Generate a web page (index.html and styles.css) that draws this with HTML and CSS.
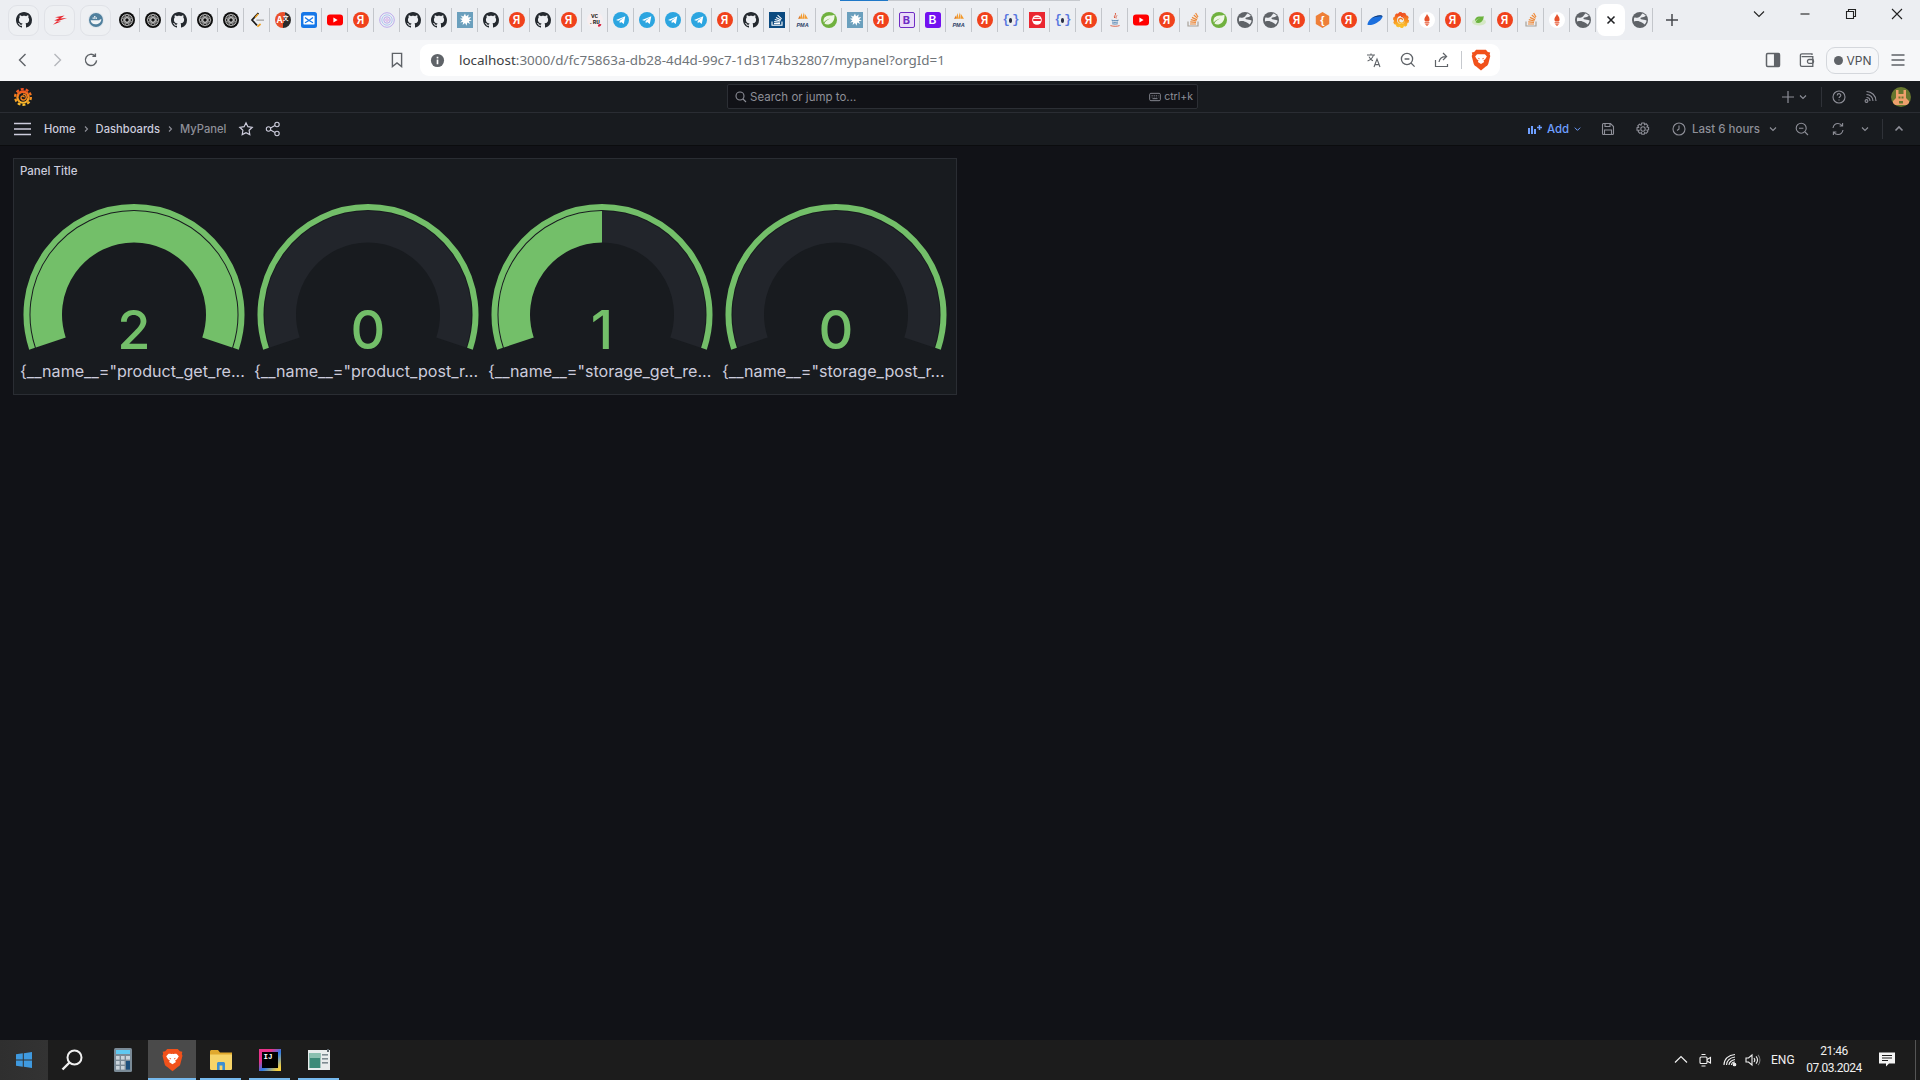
FILE: index.html
```html
<!DOCTYPE html>
<html lang="en">
<head>
<meta charset="utf-8">
<title>MyPanel - Dashboards - Grafana</title>
<link rel="stylesheet" href="styles.css">
</head>
<body>
<svg class="sprite" aria-hidden="true">
  <defs>
    <linearGradient id="gfg" x1="0" y1="1" x2="0" y2="0"><stop offset="0" stop-color="#fbc02d"/><stop offset=".55" stop-color="#f6851f"/><stop offset="1" stop-color="#ef4f22"/></linearGradient>
  </defs>
  <symbol id="gh" viewBox="0 0 16 16"><path fill="#24292f" d="M8 0C3.58 0 0 3.58 0 8c0 3.54 2.29 6.53 5.47 7.59.4.07.55-.17.55-.38 0-.19-.01-.82-.01-1.49-2.01.37-2.53-.49-2.69-.94-.09-.23-.48-.94-.82-1.13-.28-.15-.68-.52-.01-.53.63-.01 1.08.58 1.23.82.72 1.21 1.87.87 2.33.66.07-.52.28-.87.51-1.07-1.78-.2-3.64-.89-3.64-3.95 0-.87.31-1.59.82-2.15-.08-.2-.36-1.02.08-2.12 0 0 .67-.21 2.2.82.64-.18 1.32-.27 2-.27.68 0 1.36.09 2 .27 1.53-1.04 2.2-.82 2.2-.82.44 1.1.16 1.92.08 2.12.51.56.82 1.27.82 2.15 0 3.07-1.87 3.75-3.65 3.95.29.25.54.73.54 1.48 0 1.07-.01 1.93-.01 2.2 0 .21.15.46.55.38A8.013 8.013 0 0016 8c0-4.42-3.58-8-8-8z"/></symbol>
  <symbol id="z" viewBox="0 0 16 16"><path fill="#e8222a" d="M3 5.2 12.6 3.6 8.200 6.600 15 6 4.600 9.400 9 9.600 1 12.800 5.600 8.800 2.200 8.600 7.600 6Z"/></symbol>
  <symbol id="dock" viewBox="0 0 16 16"><circle cx="8" cy="8" r="8" fill="#dfe6ec"/><circle cx="8" cy="8" r="7" fill="#4f7f9d"/><path fill="#f1f4f6" d="M2.600 8.200h8.600c.6-.6 1-.9 2.200-.9-.2 3-2.800 5-6 5-2.600 0-4.400-1.600-4.800-4.100Z"/><path fill="#fff" d="M4.600 5.600h1.200v1.200H4.600zm1.600 0h1.200v1.200H6.200zm1.600 0H9v1.200H7.800zM6.200 4h1.200v1.200H6.200z"/></symbol>
  <symbol id="ai" viewBox="0 0 16 16"><circle cx="8" cy="8" r="8" fill="#0d0d0d"/><g fill="none" stroke="#e6e6e6" stroke-width=".55"><circle cx="8" cy="8" r="5.800"/><circle cx="8" cy="8" r="2"/><ellipse cx="8" cy="8" rx="2.400" ry="5.600"/><ellipse cx="8" cy="8" rx="5.600" ry="2.400"/><ellipse cx="8" cy="8" rx="2.400" ry="5.600" transform="rotate(45 8 8)"/><ellipse cx="8" cy="8" rx="2.400" ry="5.600" transform="rotate(-45 8 8)"/></g></symbol>
  <symbol id="lc" viewBox="0 0 16 16"><path d="M9.400 1 3 8l5 5.400" fill="none" stroke="#1a1a1a" stroke-width="1.700"/><path d="M8.400 14.600 11.600 12" fill="none" stroke="#f0a020" stroke-width="1.700"/><path d="M9.200 2 6 5.600" fill="none" stroke="#f0a020" stroke-width="1.400"/><path d="M7.400 8.200H15" stroke="#b3b3b3" stroke-width="1.600"/></symbol>
  <symbol id="mail" viewBox="0 0 16 16"><rect width="16" height="16" rx="2.500" fill="#1677e8"/><rect x="2.400" y="3.400" width="11.200" height="9.200" rx="1.200" fill="#fff"/><path d="M4 5.400 8 8.400l4-3M4 10.800l4-2.400 4 2.400" fill="none" stroke="#1677e8" stroke-width="1.300"/></symbol>
  <symbol id="yt" viewBox="0 0 16 16"><rect y="2.600" width="16" height="10.800" rx="3" fill="#f00"/><path fill="#fff" d="m6.400 5.400 4.200 2.600-4.200 2.600Z"/></symbol>
  <symbol id="brain" viewBox="0 0 16 16"><g fill="none" stroke="#b7a4ec" stroke-width=".9"><circle cx="8" cy="8" r="7.300"/><circle cx="8" cy="8" r="5.200" stroke="#a8c4f0"/><circle cx="8" cy="8" r="3.200"/><circle cx="8" cy="8" r="1.300" stroke="#d6a6e6"/></g></symbol>
  <symbol id="splash" viewBox="0 0 16 16"><rect width="16" height="16" fill="#6a9fbd"/><path fill="#fff" d="m8 1.600 1 2.600 2.800-1.800-.8 3 3.200-.4-2.200 2.400 2.800 1-3 .8 1.400 2.800-3-1.400-.6 3.200-1.600-2.800-2.400 2 .6-3-3 .4 2.200-2.200-2.600-1.400 3-.6L3.600 3.400l2.800 1.200Z"/></symbol>
  <symbol id="tg" viewBox="0 0 16 16"><circle cx="8" cy="8" r="8" fill="#2ca5e0"/><path fill="#fff" d="M3 7.900 12.300 4.200 10.800 11.900 8.100 9.900 6.800 11.200 6.500 9 11 5.400 5.300 8.700Z"/></symbol>
  <symbol id="sob" viewBox="0 0 16 16"><rect width="16" height="16" fill="#0b4a80"/><g fill="none" stroke="#fff" stroke-width="1.100"><path d="M3 9.600v3.600h10V9.600"/><path d="M5 11.600h6M5.200 9.600l5.800.6M5.800 7.500l5.600 1.500M7 5.400l5 2.600M8.600 3.200l4 3.600"/></g></symbol>
  <symbol id="pmas" viewBox="0 0 16 16"><path fill="#f29a2e" d="M3.400 10.400 6.400 2.600l.8 7.800Zm3.800 0L9 1.600l1 8.800Zm3.200 0-.2-7 4.400 7Z"/><path fill="#d8701a" d="m1.400 10.400 2.800-4.800-.4 4.800Z"/></symbol>
  <symbol id="spr" viewBox="0 0 16 16"><circle cx="8" cy="8" r="8" fill="#70b13f"/><path fill="#eef6e6" d="M13.400 2.800c.7 4.600-1.600 9-6 9.600-1.600.2-3-.2-4-1 .6-2 3-4 6-5-2.600.4-5.200 2-6.600 4C1.800 7.600 3.400 4.400 7 3.800c2.400-.4 4.600.2 6.400-1Z"/></symbol>
  <symbol id="red" viewBox="0 0 16 16"><rect width="16" height="16" fill="#ea2630"/><circle cx="8" cy="8" r="4.800" fill="#fff"/><rect x="4" y="7" width="8" height="2" rx="1" fill="#ea2630"/><path d="M5.400 5.600h5.200" stroke="#ea2630" stroke-width=".8"/></symbol>
  <symbol id="java" viewBox="0 0 16 16"><path d="M8.400 1c1 2-2 3-.8 5M10 3.400c-1 1.200-1.400 1.600-.8 3" fill="none" stroke="#d8482a" stroke-width=".9"/><path d="M4.600 8.200c2 .6 5 .6 7 0M5 10c2 .5 4.400.5 6 0M5.200 11.800c2 .4 4 .4 5.600 0" fill="none" stroke="#4d7fae" stroke-width=".9"/><path d="M3.400 13.600c2.800.9 6.800.9 9.200 0" fill="none" stroke="#d8482a" stroke-width=".8"/></symbol>
  <symbol id="so" viewBox="0 0 16 16"><path d="M3 9.600v4.400h10V9.600" fill="none" stroke="#a8a29a" stroke-width="1.200"/><g fill="none" stroke="#ee8a3a" stroke-width="1.200"><path d="M5 12h6M5.200 9.800l5.800.5M5.800 7.600l5.600 1.400M7 5.400l5 2.500M8.800 3l3.800 3.400M10.600 1l2.400 4"/></g></symbol>
  <symbol id="globe" viewBox="0 0 16 16"><circle cx="8" cy="8" r="8" fill="#5f6368"/><path fill="#ebedf1" d="M10.400 1.400c1.400.4 2.600 1.200 3.400 2.400-1.200 1.200-2.800 1.400-4.400 1.600-1.200.2-1.200 1.400-.2 1.800 1.600.6 3.600.4 5.400 1.400-.2 1.600-1 3-2.200 4-1-1.800-3-2.400-5-3.200C6.200 9 4 9 2.200 9.600c-.4-1.200-.4-2.600.2-4C4.600 6 6.800 5.600 8 4.400c.8-.8 1.400-2 2.400-3Z"/></symbol>
  <symbol id="swoosh" viewBox="0 0 16 16"><path fill="#1b6fde" d="M.4 12.600C1 8 6 3.400 13 3.200c1.400 0 2.800.4 2.600 1.400-.6 3.400-6 7.400-11.600 8.400-1.400.2-3.400.2-3.600-.4Z"/><path fill="#16233c" d="M5 6.400C7.400 4 11 3 14 3.600c1 .2 1.400.6 1.400 1-3-1-7-.4-10.400 1.800Z"/></symbol>
  <symbol id="gfs" viewBox="0 0 16 16"><circle cx="8" cy="8" r="5.600" fill="none" stroke="url(#gfg)" stroke-width="3.400"/><circle cx="8" cy="8" r="7" fill="none" stroke="url(#gfg)" stroke-width="2" stroke-dasharray="2.600 1.800"/><path d="M8 4.400c2.400 0 3.800 1.800 3.600 3.800-.2 2-2 3.200-3.600 3-1.400-.2-2.400-1.200-2.400-2.600 0-1.200 1-2.200 2.200-2.200 1 0 1.800.8 1.600 1.800" fill="none" stroke="url(#gfg)" stroke-width="1.300"/></symbol>
  <symbol id="prom" viewBox="0 0 16 16"><circle cx="8" cy="8" r="8" fill="#fff"/><path fill="#e6522c" d="M8 2c.4 1.600 2.600 2.600 2.600 5.400 0 .8-.4 1.600-1 2H6.400c-.6-.4-1-1.200-1-2C5.400 5.400 7.200 4 8 2ZM5.600 10.200h4.800v1H5.600Zm.8 1.600h3.200v.9H6.400Zm.8 1.400h1.600v.8H7.200Z"/></symbol>
  <symbol id="leaf" viewBox="0 0 16 16"><ellipse cx="8" cy="10" rx="7" ry="3.400" fill="#d5e8c6"/><path fill="#6cb33f" d="M12.600 4c.4 3.400-1.600 6.600-5 7-1.200.2-2.200-.2-3-.8C5 8.400 7 7 9.400 6 7.400 6.400 5.400 7.600 4.200 9.200 3.600 7 5 5 7.800 4.600c1.800-.2 3.400.2 4.800-.6Z"/></symbol>

  <symbol id="brave" viewBox="0 0 16 18"><path fill="#f1511b" d="M4 .6h8l1.600 1.800 1.900.4-.4 1.600.5 1.400-1.600 6.200c-.3 1-.9 1.600-1.800 2.200L8 17.600l-4.200-3.400c-.9-.6-1.500-1.200-1.800-2.200L.4 5.800.9 4.400.5 2.800l1.900-.4Z"/><path fill="#fff" d="M8 4.200c1.200.4 2.600-.2 3.400.4l1.400 1.600-1.400 2.200-1.400 1 .6 1.200L8 12.200l-2.600-1.600.6-1.200-1.400-1-1.400-2.200 1.400-1.600C5.400 4 6.800 4.600 8 4.200Z"/><path fill="#f1511b" d="M5.400 7.200l1.600.6-.6.8zm5.200 0-1.600.6.6.8zM7 12.800h2L8 14.200z"/></symbol>
  <symbol id="win" viewBox="0 0 16 16"><path fill="#3f9ae0" d="M0 2.300 6.800 1.300v6.200H0Zm7.800-1.100L16 0v7.500H7.800ZM0 8.500h6.800v6.200L0 13.700Zm7.800 0H16V16l-8.200-1.200Z"/></symbol>
  <symbol id="calc" viewBox="0 0 18 24"><rect width="18" height="24" rx="1.500" fill="#7a8a96"/><rect x="2" y="2" width="14" height="4" fill="#5fc8f0"/><g fill="#c9d3da"><rect x="2" y="8" width="3.600" height="3.600"/><rect x="7" y="8" width="3.600" height="3.600"/><rect x="2" y="13" width="3.600" height="3.600"/><rect x="7" y="13" width="3.600" height="3.600"/><rect x="2" y="18" width="3.600" height="3.600"/><rect x="7" y="18" width="3.600" height="3.600"/></g><rect x="12" y="8" width="4" height="3.600" fill="#c9d3da"/><rect x="12" y="13" width="4" height="8.600" fill="#1c4f7c"/></symbol>
  <symbol id="folder" viewBox="0 0 22 20"><path fill="#e0a92e" d="M0 1.600C0 .7.7 0 1.600 0H8l2 2.400H22V6H0Z"/><path fill="#f6d469" d="M0 4.400h22v14c0 .9-.7 1.600-1.600 1.600H1.600C.7 20 0 19.300 0 18.400Z"/><path fill="#3d8fd1" d="M7 20v-6.400C7 12.700 7.700 12 8.600 12h4.800c.9 0 1.600.7 1.600 1.600V20h-2.600v-4.600H9.600V20Z"/></symbol>
  <symbol id="app" viewBox="0 0 22 22"><rect y="1" width="22" height="20" fill="#e8ecec"/><rect x="1.400" y="4" width="11" height="15" fill="#3d8a78"/><rect x="1.400" y="4" width="11" height="5" fill="#8bc0b0"/><g fill="#7c8a90"><rect x="14" y="5" width="6" height="1.600"/><rect x="14" y="9" width="6" height="1.600"/><rect x="14" y="13" width="6" height="1.600"/></g><rect x="19" y="0" width="2" height="3" fill="#59636a"/></symbol>
</svg>

<header class="tabstrip">
  <div class="load-line"><span class="load-blue"></span><span class="load-grey"></span></div>
  <span class="pin"><svg class="fav"><use href="#gh"/></svg></span>
  <span class="pin"><svg class="fav"><use href="#z"/></svg></span>
  <span class="pin pin-last"><svg class="fav"><use href="#dock"/></svg></span>
  <span class="tab"><svg class="fav"><use href="#ai"/></svg></span>
  <span class="tab"><svg class="fav"><use href="#ai"/></svg></span>
  <span class="tab"><svg class="fav"><use href="#gh"/></svg></span>
  <span class="tab"><svg class="fav"><use href="#ai"/></svg></span>
  <span class="tab"><svg class="fav"><use href="#ai"/></svg></span>
  <span class="tab"><svg class="fav"><use href="#lc"/></svg></span>
  <span class="tab"><span class="fav anki"><b>A</b><i>文</i></span></span>
  <span class="tab"><svg class="fav"><use href="#mail"/></svg></span>
  <span class="tab"><svg class="fav"><use href="#yt"/></svg></span>
  <span class="tab"><span class="fav ya">Я</span></span>
  <span class="tab"><svg class="fav"><use href="#brain"/></svg></span>
  <span class="tab"><svg class="fav"><use href="#gh"/></svg></span>
  <span class="tab"><svg class="fav"><use href="#gh"/></svg></span>
  <span class="tab"><svg class="fav"><use href="#splash"/></svg></span>
  <span class="tab"><svg class="fav"><use href="#gh"/></svg></span>
  <span class="tab"><span class="fav ya">Я</span></span>
  <span class="tab"><svg class="fav"><use href="#gh"/></svg></span>
  <span class="tab"><span class="fav ya">Я</span></span>
  <span class="tab"><span class="fav vc">VC<br>.RU</span></span>
  <span class="tab"><svg class="fav"><use href="#tg"/></svg></span>
  <span class="tab"><svg class="fav"><use href="#tg"/></svg></span>
  <span class="tab"><svg class="fav"><use href="#tg"/></svg></span>
  <span class="tab"><svg class="fav"><use href="#tg"/></svg></span>
  <span class="tab"><span class="fav ya">Я</span></span>
  <span class="tab"><svg class="fav"><use href="#gh"/></svg></span>
  <span class="tab"><svg class="fav"><use href="#sob"/></svg></span>
  <span class="tab"><span class="fav pma"><svg class="pma-sails"><use href="#pmas"/></svg><span class="pma-text">PMA</span></span></span>
  <span class="tab"><svg class="fav"><use href="#spr"/></svg></span>
  <span class="tab"><svg class="fav"><use href="#splash"/></svg></span>
  <span class="tab"><span class="fav ya">Я</span></span>
  <span class="tab"><span class="fav bo">B</span></span>
  <span class="tab"><span class="fav bs">B</span></span>
  <span class="tab"><span class="fav pma"><svg class="pma-sails"><use href="#pmas"/></svg><span class="pma-text">PMA</span></span></span>
  <span class="tab"><span class="fav ya">Я</span></span>
  <span class="tab"><span class="fav api">{<i></i>}</span></span>
  <span class="tab"><svg class="fav"><use href="#red"/></svg></span>
  <span class="tab"><span class="fav api">{<i></i>}</span></span>
  <span class="tab"><span class="fav ya">Я</span></span>
  <span class="tab"><svg class="fav"><use href="#java"/></svg></span>
  <span class="tab"><svg class="fav"><use href="#yt"/></svg></span>
  <span class="tab"><span class="fav ya">Я</span></span>
  <span class="tab"><svg class="fav"><use href="#so"/></svg></span>
  <span class="tab"><svg class="fav"><use href="#spr"/></svg></span>
  <span class="tab"><svg class="fav"><use href="#globe"/></svg></span>
  <span class="tab"><svg class="fav"><use href="#globe"/></svg></span>
  <span class="tab"><span class="fav ya">Я</span></span>
  <span class="tab"><span class="fav hex">{</span></span>
  <span class="tab"><span class="fav ya">Я</span></span>
  <span class="tab"><svg class="fav"><use href="#swoosh"/></svg></span>
  <span class="tab"><svg class="fav"><use href="#gfs"/></svg></span>
  <span class="tab"><svg class="fav"><use href="#prom"/></svg></span>
  <span class="tab"><span class="fav ya">Я</span></span>
  <span class="tab"><svg class="fav"><use href="#leaf"/></svg></span>
  <span class="tab"><span class="fav ya">Я</span></span>
  <span class="tab"><svg class="fav"><use href="#so"/></svg></span>
  <span class="tab"><svg class="fav"><use href="#prom"/></svg></span>
  <span class="tab"><svg class="fav"><use href="#globe"/></svg></span>
  <span class="tab-active"><svg class="ico ico-14" viewBox="0 0 16 16"><path d="M4 4l8 8M12 4l-8 8" stroke-width="1.800"/></svg></span>
  <span class="tab"><svg class="fav"><use href="#globe"/></svg></span>
  <span class="new-tab"><svg class="ico ico-16" viewBox="0 0 16 16"><path d="M8 2v12M2 8h12" stroke-width="1.500"/></svg></span>
  <span class="win-controls">
    <span class="win-btn"><svg class="ico ico-12" viewBox="0 0 12 12"><path d="M1 3.500 6 8.500l5-5"/></svg></span>
    <span class="win-btn"><svg class="ico ico-12" viewBox="0 0 12 12"><path d="M1.500 6h9"/></svg></span>
    <span class="win-btn"><svg class="ico ico-12" viewBox="0 0 12 12"><path d="M1.500 3.500h7v7h-7zM3.500 3.500v-2h7v7h-2"/></svg></span>
    <span class="win-btn"><svg class="ico ico-12" viewBox="0 0 12 12"><path d="M1 1l10 10M11 1 1 11"/></svg></span>
  </span>
</header>

<nav class="toolbar">
  <span class="tb-btn tb-back"><svg class="ico ico-16" viewBox="0 0 16 16"><path d="M10.500 2 4.500 8l6 6" stroke-width="1.400"/></svg></span>
  <span class="tb-btn tb-fwd"><svg class="ico ico-16" viewBox="0 0 16 16"><path d="M5.500 2l6 6-6 6" stroke-width="1.400"/></svg></span>
  <span class="tb-btn tb-reload"><svg class="ico ico-16" viewBox="0 0 16 16"><path d="M13.600 8.400A5.600 5.600 0 1 1 11.800 3.800M12.400 1.400v3h-3" stroke-width="1.400"/></svg></span>
  <span class="tb-btn tb-mark"><svg class="ico ico-16" viewBox="0 0 16 16"><path d="M3.400 1.400h9.200v13.200L8 11l-4.600 3.600Z" stroke-width="1.400"/></svg></span>
  <div class="omnibox">
    <svg class="info" viewBox="0 0 16 16"><circle cx="8" cy="8" r="7" fill="#5f6368"/><rect x="7.100" y="7" width="1.800" height="5" fill="#fff"/><rect x="7.100" y="4" width="1.800" height="1.800" fill="#fff"/></svg>
    <span class="url"><span class="url-host">localhost</span>:3000/d/fc75863a-db28-4d4d-99c7-1d3174b32807/mypanel?orgId=1</span>
    <span class="omni-btn"><svg class="ico ico-16" viewBox="0 0 16 16"><path d="M1 3h8M5 1.400V3M7.400 3C6.800 6 4.400 8 1.600 9M3 4.600c.8 2 2.400 3.600 4 4.200M8 15l3-8 3 8M9 12.600h4" stroke-width="1.100"/></svg></span>
    <span class="omni-btn"><svg class="ico ico-16" viewBox="0 0 16 16"><circle cx="7" cy="7" r="5.600" stroke-width="1.300"/><path d="M11 11l3.600 3.600M4.600 7h4.800" stroke-width="1.300"/></svg></span>
    <span class="omni-btn"><svg class="ico ico-16" viewBox="0 0 16 16"><path d="M1.500 8v6.500h12V12M5 10c.6-3.400 3-5.400 6.800-5.400M9 1l3.600 3.600L9 8" stroke-width="1.200"/></svg></span>
    <span class="omni-div"></span>
    <svg class="brave-ico"><use href="#brave"/></svg>
  </div>
  <span class="tb-btn tb-side"><svg class="ico ico-16" viewBox="0 0 16 16"><rect x="1.500" y="1.500" width="13" height="13" rx="1.200" stroke-width="1.500"/><rect x="9.500" y="2" width="4.500" height="12" fill="currentColor"/></svg></span>
  <span class="tb-btn tb-wallet"><svg class="ico ico-16" viewBox="0 0 16 16"><path d="M13 3V1.800H3C2 1.800 1.400 2.400 1.400 3.400V13c0 .8.600 1.400 1.400 1.400h11V4.600H2.600" stroke-width="1.300"/><rect x="8.500" y="7.500" width="6" height="3.800" rx="1.500" stroke-width="1.300"/></svg></span>
  <span class="vpn"><span class="vpn-dot"></span>VPN</span>
  <span class="tb-btn tb-menu"><svg class="ico ico-16" viewBox="0 0 16 16"><path d="M1.500 3h13M1.500 8h13M1.500 13h13" stroke-width="1.400"/></svg></span>
</nav>

<div class="gf-top">
  <div class="gf-logo-cell">
    <svg class="gf-logo" viewBox="0 0 16 16"><circle cx="8" cy="8" r="6" fill="url(#gfg)"/><circle cx="8" cy="8" r="7" fill="none" stroke="url(#gfg)" stroke-width="2" stroke-dasharray="2.600 1.800"/><circle cx="8" cy="8.300" r="3.900" fill="#181b1f"/><path d="M8 5.400c2 0 3 1.400 2.900 2.900-.1 1.500-1.300 2.500-2.700 2.400-1.200-.1-2-1-2-2 0-.9.700-1.600 1.600-1.600.7 0 1.300.6 1.200 1.300" fill="none" stroke="#f6851f" stroke-width="1.200"/></svg>
  </div>
  <div class="search">
    <svg class="ico ico-12" viewBox="0 0 12 12"><circle cx="5" cy="5" r="4"/><path d="M8 8l3 3"/></svg>
    <span class="search-text">Search or jump to...</span>
    <svg class="ico kbd" viewBox="0 0 14 12"><rect x=".6" y="1.600" width="12.800" height="8.800" rx="1.400"/><path d="M3 4.200h1M5.500 4.200h1M8 4.200h1M10.500 4.200h.5M3 6h1M5.500 6h1M8 6h1M10.500 6h.5M4 8h6"/></svg>
    <span class="search-key">ctrl+k</span>
  </div>
  <div class="gf-top-right">
    <svg class="ico ico-14" viewBox="0 0 14 14"><path d="M7 1v12M1 7h12" stroke-width="1.200"/></svg>
    <svg class="ico chev top-chev" viewBox="0 0 10 10"><path d="M2 3.500 5 6.500l3-3"/></svg>
    <span class="v-div v-div-top"></span>
    <svg class="ico ico-14 top-help" viewBox="0 0 14 14"><circle cx="7" cy="7" r="6"/><path d="M5.200 5.400c0-2.300 3.600-2.300 3.600-.1 0 1.400-1.800 1.400-1.800 2.800M7 9.600v1"/></svg>
    <svg class="ico ico-14 top-rss" viewBox="0 0 14 14"><path d="M3.500 7.500c2 0 3.500 1.500 3.500 3.500M3.500 4.500c3.700 0 6.500 2.800 6.500 6.500M3.500 1.500c5.300 0 9.500 4.200 9.500 9.500"/><circle cx="3.500" cy="11" r="1.400"/></svg>
    <svg class="avatar" viewBox="0 0 20 20"><defs><clipPath id="avc"><circle cx="10" cy="10" r="10"/></clipPath></defs><g clip-path="url(#avc)"><rect width="20" height="20" fill="#66762e"/><path fill="#eea06c" d="M5 3h2.500v4h5V3H15v8l3 3v4H2v-4l3-3Z"/><path fill="#66762e" d="M7.500 9.500h2v2h-2zm3 0h2v2h-2zM8 14h4v2.500H8z"/></g></svg>
  </div>
</div>

<div class="gf-bar">
  <svg class="ico gf-burger" viewBox="0 0 17 14"><path d="M0 1.500h17M0 7h17M0 12.500h17" stroke-width="1.600"/></svg>
  <a class="crumb">Home</a>
  <svg class="ico crumb-sep" viewBox="0 0 8 10"><path d="M3 2.500 5.500 5 3 7.500"/></svg>
  <a class="crumb">Dashboards</a>
  <svg class="ico crumb-sep" viewBox="0 0 8 10"><path d="M3 2.500 5.500 5 3 7.500"/></svg>
  <a class="crumb crumb-current">MyPanel</a>
  <svg class="ico bar-star" viewBox="0 0 16 16"><path d="M8 1.800 9.900 5.700l4.300.6-3.100 3 .7 4.300L8 11.600l-3.800 2 .7-4.300-3.100-3 4.300-.6Z" stroke-width="1.200"/></svg>
  <svg class="ico bar-share" viewBox="0 0 16 16"><circle cx="3.500" cy="8" r="2.200"/><circle cx="12" cy="3.500" r="2.200"/><circle cx="12" cy="12.500" r="2.200"/><path d="M5.500 7 10 4.500M5.500 9l4.500 2.500"/></svg>
  <div class="bar-right">
    <span class="add">
      <svg class="add-ico" viewBox="0 0 14 10"><path d="M0 4h2v6H0zM3 2h2v8H3zM6 5h2v5H6z" fill="currentColor"/><path d="M11.500 1v5M9 3.500h5" stroke="currentColor" stroke-width="1.500"/></svg>
      Add
      <svg class="ico chev" viewBox="0 0 10 10"><path d="M2 3.500 5 6.500l3-3"/></svg>
    </span>
    <span class="bar-btn bar-save"><svg class="ico ico-14" viewBox="0 0 14 14"><path d="M1.500 2.500c0-.6.400-1 1-1h7l3 3v7c0 .6-.400 1-1 1h-9c-.6 0-1-.4-1-1ZM4 1.500v3h5v-3M3.500 12.500V8h7v4.500"/></svg></span>
    <span class="bar-btn bar-gear"><svg class="ico ico-14" viewBox="0 0 14 14"><circle cx="7" cy="7" r="2.200"/><path d="M5.800 1h2.400l.4 1.700 1.500-.9 1.700 1.700-.9 1.500 1.700.4v2.400l-1.700.4.900 1.500-1.700 1.700-1.500-.9-.4 1.700H5.800l-.4-1.700-1.500.9-1.700-1.700.9-1.500L1 8.200V5.800l1.700-.4-.9-1.500 1.700-1.700 1.500.9Z"/></svg></span>
    <span class="time"><svg class="ico ico-14" viewBox="0 0 14 14"><circle cx="7" cy="7" r="6"/><path d="M7 3.500V7L5 8.500"/></svg><span class="time-text">Last 6 hours</span><svg class="ico chev" viewBox="0 0 10 10"><path d="M2 3.500 5 6.500l3-3"/></svg></span>
    <span class="bar-btn bar-zoom"><svg class="ico ico-14" viewBox="0 0 14 14"><circle cx="6.200" cy="6.200" r="5"/><path d="M10 10l3 3M4 6.200h4.400"/></svg></span>
    <span class="bar-btn bar-refresh"><svg class="ico ico-14" viewBox="0 0 14 14"><path d="M2 6c.5-2.600 2.500-4.500 5-4.500 1.800 0 3.200.9 4.200 2.300M12 8c-.5 2.600-2.500 4.500-5 4.500-1.800 0-3.200-.9-4.200-2.300M11.600 1v3h-3M2.400 13v-3h3"/></svg></span>
    <span class="bar-btn bar-rchev"><svg class="ico chev" viewBox="0 0 10 10"><path d="M2 3.500 5 6.500l3-3"/></svg></span>
    <span class="v-div v-div-bar"></span>
    <span class="bar-btn bar-up"><svg class="ico ico-12" viewBox="0 0 12 12"><path d="M2.500 7.500 6 4l3.500 3.500" stroke-width="1.600"/></svg></span>
  </div>
</div>

<main class="canvas">
  <section class="panel">
    <h2 class="panel-title">Panel Title</h2>
    <div class="gauges">
      <figure class="gauge">
        <svg class="gauge-svg" viewBox="0 0 224 152">
          <path class="g-thr" d="M10.050 146.710A107.500 107.500 0 1 1 213.950 146.710"/>
          <path class="g-val" d="M28.790 140.440A87.750 87.750 0 1 1 195.210 140.440"/>
        </svg>
        <span class="gauge-value">2</span>
        <figcaption class="gauge-label">{__name__="product_get_re...</figcaption>
      </figure>
      <figure class="gauge">
        <svg class="gauge-svg" viewBox="0 0 224 152">
          <path class="g-thr" d="M10.050 146.710A107.500 107.500 0 1 1 213.950 146.710"/>
          <path class="g-track" d="M28.790 140.440A87.750 87.750 0 1 1 195.210 140.440"/>
        </svg>
        <span class="gauge-value">0</span>
        <figcaption class="gauge-label">{__name__="product_post_r...</figcaption>
      </figure>
      <figure class="gauge">
        <svg class="gauge-svg" viewBox="0 0 224 152">
          <path class="g-thr" d="M10.050 146.710A107.500 107.500 0 1 1 213.950 146.710"/>
          <path class="g-track" d="M28.790 140.440A87.750 87.750 0 1 1 195.210 140.440"/>
          <path class="g-val" d="M28.790 140.440A87.750 87.750 0 0 1 112 24.850"/>
        </svg>
        <span class="gauge-value">1</span>
        <figcaption class="gauge-label">{__name__="storage_get_re...</figcaption>
      </figure>
      <figure class="gauge">
        <svg class="gauge-svg" viewBox="0 0 224 152">
          <path class="g-thr" d="M10.050 146.710A107.500 107.500 0 1 1 213.950 146.710"/>
          <path class="g-track" d="M28.790 140.440A87.750 87.750 0 1 1 195.210 140.440"/>
        </svg>
        <span class="gauge-value">0</span>
        <figcaption class="gauge-label">{__name__="storage_post_r...</figcaption>
      </figure>
    </div>
  </section>
</main>

<footer class="taskbar">
  <span class="task task-start"><svg class="task-ico-16"><use href="#win"/></svg></span>
  <span class="task task-wide"><svg class="ico task-search" viewBox="0 0 22 22"><circle cx="13.500" cy="8.500" r="7" stroke-width="2"/><path d="M8.500 13.500 1.500 20.500" stroke-width="2.400"/></svg></span>
  <span class="task task-wide"><svg class="task-calc"><use href="#calc"/></svg></span>
  <span class="task task-active task-open"><svg class="task-brave"><use href="#brave"/></svg></span>
  <span class="task task-open"><svg class="task-ico-22"><use href="#folder"/></svg></span>
  <span class="task task-open"><span class="ij"><span class="ij-text">IJ</span></span></span>
  <span class="task task-open"><svg class="task-ico-22"><use href="#app"/></svg></span>
  <div class="tray">
    <svg class="ico tray-ico" viewBox="0 0 14 14"><path d="M1 9.500 7 3.500l6 6" stroke-width="1.200"/></svg>
    <svg class="ico tray-ico tray-meet" viewBox="0 0 14 14"><rect x="2" y="4" width="7" height="6.500" rx="1"/><path d="M9 6.500l3.500-2v5.500L9 8M3.500 1.500h4M3.500 13h4"/></svg>
    <svg class="ico tray-ico tray-wifi" viewBox="0 0 14 14"><path d="M1 12c0-6 4.500-10 11-10.500M3.500 12c0-4 3.500-7.500 8.500-8M6 12c0-2.500 2.500-5 6-5.500M8.500 12c0-1.500 1.500-2.800 3.500-3"/><circle cx="11.500" cy="11.500" r="1.300" fill="currentColor"/></svg>
    <svg class="ico tray-ico tray-vol" viewBox="0 0 16 14"><path d="M1 5h2.500L7 2v10L3.500 9H1ZM9 5c1 1.200 1 2.800 0 4M11 3.400c1.800 2.100 1.800 5.100 0 7.200"/><path d="M13 1.800c2.600 3 2.600 7.400 0 10.400" opacity=".45"/></svg>
    <span class="tray-lang">ENG</span>
    <span class="clock"><span>21:46</span><span>07.03.2024</span></span>
    <svg class="notif" viewBox="0 0 16 16"><path fill="#f4f4f4" d="M0 .5h16v11h-6l-3 3v-3H0Z"/><path stroke="#1c1c1c" stroke-width="1" d="M3 3.500h10M3 6h10M3 8.500h6"/></svg>
    <span class="desk-line"></span>
  </div>
</footer>
</body>
</html>
```

FILE: styles.css
```css
* { box-sizing: border-box; }
html, body { margin: 0; height: 100%; }
body {
  display: flex;
  flex-direction: column;
  width: 1920px;
  height: 1080px;
  overflow: hidden;
  background: #111217;
  font-family: Inter, "Liberation Sans", sans-serif;
}
.sprite { position: absolute; width: 0; height: 0; }

.ico { fill: none; stroke: currentColor; stroke-width: 1.1; flex: none; display: block; }
.ico-12 { width: 12px; height: 12px; }
.ico-14 { width: 14px; height: 14px; }
.ico-16 { width: 16px; height: 16px; }
.chev { width: 10px; height: 10px; }
.fav { width: 16px; height: 16px; display: block; flex: none; }

/* favicons made of real letters */
.ya, .bs, .bo, .hex, .api, .anki, .vc, .pma { display: flex; align-items: center; justify-content: center; overflow: hidden; }
.ya { border-radius: 50%; background: #f0421c; color: #fff; font: 600 11.5px/16px Inter, sans-serif; }
.bs { border-radius: 2.5px; background: #7311f0; color: #fff; font: 600 12px/16px Inter, sans-serif; }
.bo { border: 1.500px solid #6f2cc4; border-radius: 2px; background: #eadcf9; color: #6f2cc4; font: 700 11px/13px Inter, sans-serif; }
.hex { clip-path: polygon(50% 0, 92% 25%, 92% 75%, 50% 100%, 8% 75%, 8% 25%); background: #ee7f38; color: #fff; font: 700 11px/16px "Liberation Sans", sans-serif; }
.api { justify-content: space-between; color: #5a78e0; font: 700 12px/16px "Liberation Mono", monospace; letter-spacing: -1px; }
.api i { width: 5px; height: 5px; border-radius: 50%; background: #2a2f45; }
.anki { gap: 0; border-radius: 50%; background: linear-gradient(100deg, #e9502b 55%, #2b2b2b 55%); color: #fff; }
.anki b { font: 700 8.500px/16px Inter, sans-serif; }
.anki i { font: 700 5.500px/9px "Noto Sans CJK SC", sans-serif; align-self: flex-start; margin-top: 2px; }
.vc { border-radius: 50%; background: #f7eef0; color: #222; font: 700 6px/6px "Liberation Mono", monospace; text-align: center; position: relative; }
.vc::after { content: ""; position: absolute; right: 1px; bottom: 1px; width: 3.500px; height: 3.500px; border-radius: 50%; background: #d81f3c; }
.pma { flex-direction: column; justify-content: flex-start; }
.pma-sails { display: block; width: 16px; height: 12px; margin-top: -1px; flex: none; }
.pma-text { font: italic 700 5.500px/5px "Liberation Sans", sans-serif; color: #2b3e66; }

/* browser tab strip */
.tabstrip {
  position: relative;
  display: flex;
  align-items: center;
  flex: none;
  height: 40px;
  padding-left: 8px;
  background: #eceef2;
  color: #3c4043;
}
.load-line { position: absolute; top: 0; left: 840px; display: flex; height: 1px; }
.load-blue { width: 48px; background: #1f78c8; }
.load-grey { width: 192px; background: #c6c9ce; }
.pin {
  display: flex;
  align-items: center;
  justify-content: center;
  flex: none;
  width: 31px;
  height: 31px;
  margin-right: 5px;
  border: 1px solid #e0e2e7;
  border-radius: 9px;
  background: #eef0f3;
}
.pin-last { margin-right: 3px; }
.tab {
  display: flex;
  align-items: center;
  justify-content: center;
  flex: none;
  width: 26px;
  height: 24px;
  border-right: 1px solid #c3c6cb;
}
.tab-active {
  display: flex;
  align-items: center;
  justify-content: center;
  flex: none;
  width: 28px;
  height: 32px;
  margin: 0 2px 0 1px;
  border-radius: 8px;
  background: #fff;
  color: #202124;
}
.new-tab { flex: none; margin-left: 11px; color: #45484d; }
.win-controls { display: flex; flex: none; margin-left: 56px; margin-top: -12px; }
.win-btn { display: flex; justify-content: center; width: 46px; color: #222; }

/* browser toolbar */
.toolbar {
  display: flex;
  align-items: center;
  flex: none;
  height: 41px;
  padding: 0 0 1px 6px;
  background: #f6f7f9;
  color: #5f6368;
}
.tb-btn { display: flex; align-items: center; justify-content: center; height: 28px; flex: none; }
.tb-back { width: 34px; }
.tb-fwd { width: 34px; color: #b4b7bb; }
.tb-reload { width: 33px; }
.tb-mark { width: 24px; margin-left: 278px; }
.omnibox {
  display: flex;
  align-items: center;
  flex: none;
  width: 1080px;
  height: 32px;
  margin-left: 11px;
  padding: 0 9px 0 10px;
  border-radius: 9px;
  background: #fff;
}
.info { width: 15px; height: 15px; flex: none; }
.url {
  flex: 1;
  margin-left: 14px;
  font: 13.440px "Noto Sans", sans-serif;
  color: #70757a;
  white-space: nowrap;
}
.url-host { color: #3c4043; }
.omni-btn { display: flex; justify-content: center; width: 28px; margin-right: 6px; flex: none; color: #5f6368; }
.omni-div { width: 1px; height: 18px; margin-right: 9px; background: #c6c9ce; margin-left: -1px; }
.brave-ico { width: 20px; height: 22px; flex: none; }
.tb-side { width: 28px; margin-left: 259px; }
.tb-wallet { width: 28px; margin-left: 6px; }
.vpn {
  display: flex;
  align-items: center;
  justify-content: center;
  flex: none;
  gap: 4px;
  width: 53px;
  height: 27px;
  margin-left: 5px;
  border: 1px solid #d4d7dc;
  border-radius: 9px;
  font: 12px Inter, sans-serif;
  color: #4d5156;
}
.vpn-dot { width: 9px; height: 9px; border-radius: 50%; background: #5f6368; }
.tb-menu { width: 28px; margin-left: 5px; }

/* grafana top */
.gf-top {
  display: grid;
  grid-template-columns: 727px 471px 1fr;
  align-items: center;
  flex: none;
  height: 32px;
  background: #181b1f;
  border-bottom: 1px solid #2a2d33;
}
.gf-logo-cell { padding-left: 14px; }
.gf-logo { display: block; width: 18px; height: 18px; }
.search {
  display: flex;
  align-items: center;
  height: 25px;
  padding: 0 4px 0 7px;
  border: 1px solid #2c2f35;
  border-radius: 2px;
  background: #111217;
  color: #8e8f98;
  font-size: 11.500px;
}
.search-text { margin-left: 3px; flex: 1; }
.kbd { width: 12px; height: 10px; margin-right: 3px; }
.search-key { font-size: 10.500px; }
.gf-top-right {
  display: flex;
  align-items: center;
  justify-content: flex-end;
  padding-right: 9px;
  color: #8e8f98;
}
.top-chev { margin-left: 3px; }
.v-div { display: block; flex: none; width: 1px; background: #2f3238; }
.v-div-top { height: 20px; margin: 0 10px 0 13px; }
.top-help { margin-right: 17px; }
.top-rss { margin-right: 14px; }
.avatar { width: 20px; height: 20px; display: block; flex: none; }

/* grafana nav bar */
.gf-bar {
  display: flex;
  align-items: center;
  flex: none;
  height: 33px;
  padding-left: 14px;
  background: #181b1f;
  border-bottom: 1px solid #0b0c0e;
  color: #ccccdc;
  font-size: 11.200px;
  font-weight: 500;
}
.gf-burger { width: 17px; height: 14px; margin-right: 13px; color: #ccccdc; }
.crumb { color: #ccccdc; white-space: nowrap; }
.crumb-current { color: #8e8f98; }
.crumb-sep { width: 8px; height: 10px; margin: 0 6px; color: #8e8f98; }
.bar-star { width: 16px; height: 16px; margin-left: 12px; }
.bar-share { width: 16px; height: 16px; margin-left: 11px; }
.bar-right { display: flex; align-items: center; margin-left: auto; padding-right: 9px; color: #8e8f98; }
.add { display: flex; align-items: center; gap: 5px; width: 66px; padding-left: 4px; color: #6e9fff; font-size: 11.400px; }
.add-ico { width: 14px; height: 10px; flex: none; display: block; }
.add .chev { margin-left: -1px; width: 9px; }
.bar-btn { display: flex; align-items: center; justify-content: center; flex: none; height: 24px; }
.bar-save { width: 36px; }
.bar-gear { width: 34px; }
.time { display: flex; align-items: center; width: 128px; padding-left: 12px; flex: none; }
.time-text { margin-left: 6px; width: 76px; white-space: nowrap; font-size: 11.500px; }
.bar-zoom { width: 28px; }
.bar-refresh { width: 28px; margin-left: 8px; }
.bar-rchev { width: 26px; }
.v-div-bar { height: 20px; margin: 0 4px; }
.bar-up { width: 24px; }

/* dashboard */
.canvas { flex: 1; padding: 12px 0 0 13px; }
.panel {
  width: 944px;
  height: 237px;
  padding: 0 8px;
  background: #181b1f;
  border: 1px solid #2a2d33;
}
.panel-title {
  margin: 0 0 18px -2px;
  font-size: 11.500px;
  font-weight: 500;
  line-height: 25px;
  color: #ccccdc;
}
.gauges { display: grid; grid-template-columns: repeat(4, 1fr); column-gap: 10px; }
.gauge { position: relative; margin: 0; min-width: 0; }
.gauge-svg { display: block; width: 224px; height: 152px; }
.g-thr { fill: none; stroke: #73bf69; stroke-width: 6; }
.g-val { fill: none; stroke: #73bf69; stroke-width: 31.500; }
.g-track { fill: none; stroke: #22252b; stroke-width: 31.500; }
.gauge-value {
  position: absolute;
  top: 101px;
  left: 0;
  right: 0;
  font-size: 54px;
  font-weight: 500;
  line-height: 54px;
  text-align: center;
  color: #73bf69;
}
.gauge-label {
  margin: 6px 0 0 -2px;
  font-size: 16.100px;
  line-height: 22px;
  color: #ccccdc;
  white-space: nowrap;
}

/* windows taskbar */
.taskbar {
  display: flex;
  align-items: center;
  flex: none;
  height: 40px;
  background: #1c1c1c;
  color: #f0f0f0;
}
.task { display: flex; align-items: center; justify-content: center; flex: none; position: relative; width: 49px; height: 40px; }
.task-start { width: 48px; background: linear-gradient(90deg, #2f2f2f, #333); }
.task-wide { width: 50px; }
.task-active { width: 48px; background: #4a4a4a; }
.task-open::after {
  content: "";
  position: absolute;
  left: 4px;
  right: 4px;
  bottom: 0;
  height: 2px;
  background: #76b9ed;
}
.task-active::after { left: 0; right: 0; }
.task-ico-16 { width: 16px; height: 16px; }
.task-search { width: 22px; height: 22px; margin-right: 2px; }
.task-calc { width: 18px; height: 24px; }
.task-brave { width: 21px; height: 24px; }
.task-ico-22 { width: 22px; height: 22px; }
.ij {
  display: block;
  width: 22px;
  height: 22px;
  padding: 3px;
  background: linear-gradient(135deg, #e8338a 30%, #2b7be8 55%, #f9d23c 90%);
}
.ij-text {
  display: block;
  width: 16px;
  height: 16px;
  padding-left: 2px;
  background: #000;
  color: #fff;
  font: 700 7.500px/10px "Liberation Mono", monospace;
}
.tray { display: flex; align-items: center; margin-left: auto; height: 40px; font: 12px Roboto, sans-serif; color: #f0f0f0; }
.tray-ico { width: 14px; height: 14px; }
.tray-meet { margin-left: 10px; }
.tray-wifi { margin-left: 11px; }
.tray-vol { width: 16px; margin-left: 8px; }
.tray-lang { margin-left: 10px; width: 24px; }
.clock { display: flex; flex-direction: column; align-items: center; width: 60px; margin-left: 9px; line-height: 17px; letter-spacing: -.5px; }
.notif { width: 16px; height: 16px; margin-left: 15px; }
.desk-line { width: 1px; height: 40px; margin-left: 20px; margin-right: 4px; background: #555; }
```
